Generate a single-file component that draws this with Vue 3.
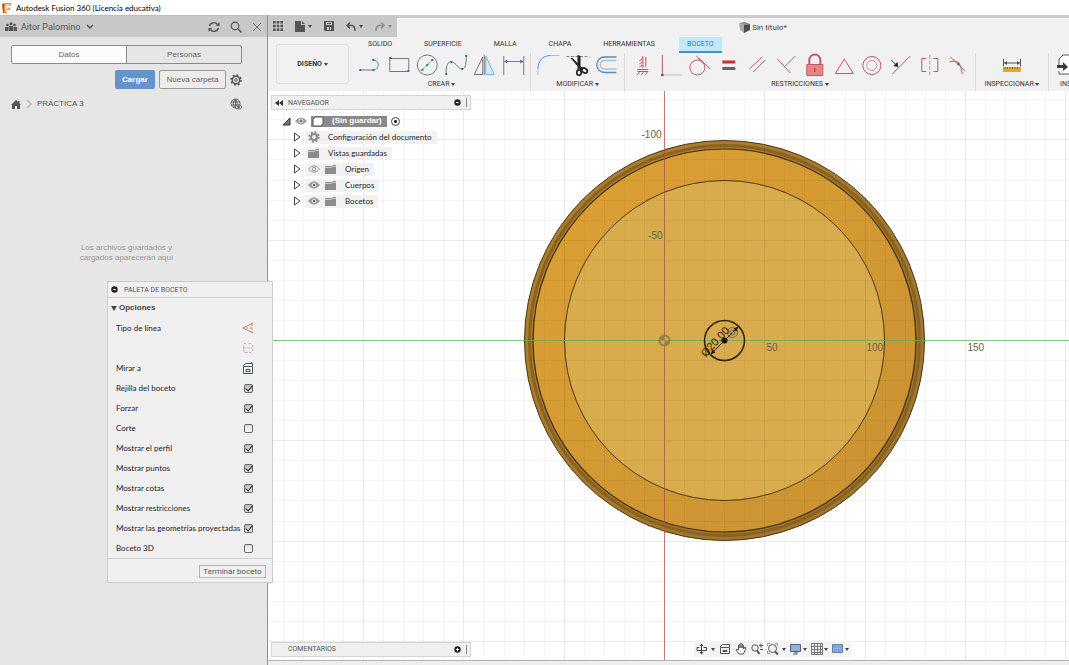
<script setup>
import { ref } from 'vue'

const minor = Array.from({ length: 81 }, (_, i) => i - 40)
const step = 20.06

const tabs = ['SOLIDO', 'SUPERFICIE', 'MALLA', 'CHAPA', 'HERRAMIENTAS', 'BOCETO']
const activeTab = ref('BOCETO')

const tree = ref([
  { label: 'Configuración del documento', icon: 'gear' },
  { label: 'Vistas guardadas', icon: 'folder' },
  { label: 'Origen', icon: 'folder', eye: true, hidden: true },
  { label: 'Cuerpos', icon: 'folder', eye: true },
  { label: 'Bocetos', icon: 'folder', eye: true }
])

const options = ref([
  { id: 'grid', label: 'Rejilla del boceto', on: true },
  { id: 'snap', label: 'Forzar', on: true },
  { id: 'slice', label: 'Corte', on: false },
  { id: 'profile', label: 'Mostrar el perfil', on: true },
  { id: 'points', label: 'Mostrar puntos', on: true },
  { id: 'dims', label: 'Mostrar cotas', on: true },
  { id: 'constraints', label: 'Mostrar restricciones', on: true },
  { id: 'projected', label: 'Mostrar las geometrías proyectadas', on: true },
  { id: 'sketch3d', label: 'Boceto 3D', on: false }
])
</script>

<template>
  <div class="app">
    <header class="titlebar">
      <svg width="10" height="10" viewBox="0 0 10 10" aria-hidden="true">
        <path d="M0 1L3 0V10H1Z" fill="#b9480f" /><path d="M2 0H9V3H5V4.500H8V7H5V10H2Z" fill="#f08a3c" />
        <path d="M4 2H8M4 5H7M4 2V9" stroke="#fff" fill="none" />
      </svg>
      <span>Autodesk Fusion 360 (Licencia educativa)</span>
    </header>

    <div class="body">
      <aside class="data-panel">
        <div class="user-bar">
          <svg width="12" height="10" viewBox="0 0 12 10" fill="#555" aria-hidden="true">
            <circle cx="2.500" cy="3" r="1.300" /><circle cx="6" cy="1.800" r="1.500" /><circle cx="9.500" cy="3" r="1.300" />
            <path d="M0 9V5H3.500V9ZM4 9V4H8V9ZM8.500 9V5H12V9Z" />
          </svg>
          <button class="user">Aitor Palomino
            <svg width="8" height="6" viewBox="0 0 8 6" fill="none" stroke="#555" stroke-width="1.500"><path d="M1 1L4 4L7 1" /></svg>
          </button>
          <button class="ib" aria-label="Actualizar">
            <svg width="12" height="12" viewBox="0 0 12 12" fill="none" stroke="#555" stroke-width="1.400">
              <path d="M1.500 5A4.500 4.500 0 0 1 9.500 3.500M10.500 7A4.500 4.500 0 0 1 2.500 8.500" />
              <path d="M11.500 1V5H8ZM.5 11V7H4Z" fill="#555" stroke="none" />
            </svg>
          </button>
          <button class="ib" aria-label="Buscar">
            <svg width="12" height="12" viewBox="0 0 12 12" fill="none" stroke="#555" stroke-width="1.200"><circle cx="5" cy="5" r="3.800" /><path d="M8 8L11.500 11.500" stroke-width="1.500" /></svg>
          </button>
          <button class="ib" aria-label="Cerrar">
            <svg width="10" height="10" viewBox="0 0 10 10" stroke="#777"><path d="M1 1L9 9M9 1L1 9" /></svg>
          </button>
        </div>
        <div class="panel-content">
          <div class="segmented">
            <button class="on">Datos</button><button>Personas</button>
          </div>
          <div class="actions">
            <button class="primary">Cargar</button>
            <button class="secondary">Nueva carpeta</button>
            <button class="ib" aria-label="Ajustes">
              <svg width="12" height="12" viewBox="0 0 12 12" fill="none" stroke="#555"><circle cx="6" cy="6" r="3.700" stroke-width="1.500" /><circle cx="6" cy="6" r="1.200" /><circle cx="6" cy="6" r="5" stroke-width="1.600" stroke-dasharray="1.900 2.030" /></svg>
            </button>
          </div>
          <nav class="crumbs">
            <svg width="10" height="9" viewBox="0 0 10 9" fill="#555"><path d="M0 5L5 0L7 2V1H8.500V3.500L10 5H9V9H6V6H4V9H1V5Z" /></svg>
            <svg width="6" height="10" viewBox="0 0 6 10" fill="none" stroke="#bbb" stroke-width="1.300"><path d="M1 1L5 5L1 9" /></svg>
            <span>PRÁCTICA 3</span>
            <svg class="globe" width="12" height="12" viewBox="0 0 12 12" fill="none" stroke="#666"><circle cx="5.500" cy="5.500" r="4.500" /><path d="M1 4H10M1 7H10M5.500 1V10M5.500 1Q1 5.500 5.500 10M5.500 1Q9 5.500 5.500 10" /><ellipse cx="8.500" cy="9" rx="3.300" ry="2" fill="#eee" /><circle cx="8.500" cy="9" r="1" fill="#555" /></svg>
          </nav>
          <p class="empty">Los archivos guardados y<br>cargados aparecerán aquí</p>
        </div>
      </aside>

      <main class="workspace">
        <div class="top-row">
          <div class="quick">
            <button class="ib" aria-label="Panel de datos">
              <svg width="10" height="10" viewBox="0 0 10 10" fill="#555"><path d="M0 0H2.600V2.600H0ZM3.700 0H6.300V2.600H3.700ZM7.400 0H10V2.600H7.400ZM0 3.700H2.600V6.300H0ZM3.700 3.700H6.300V6.300H3.700ZM7.400 3.700H10V6.300H7.400ZM0 7.400H2.600V10H0ZM3.700 7.400H6.300V10H3.700ZM7.400 7.400H10V10H7.400Z" /></svg>
            </button>
            <button class="ib with-caret" aria-label="Archivo">
              <svg width="10" height="11" viewBox="0 0 10 11" fill="#555"><path d="M0 0H6V4H10V11H0ZM7 0L10 3H7Z" /></svg><i class="caret"></i>
            </button>
            <button class="ib" aria-label="Guardar">
              <svg width="10" height="10" viewBox="0 0 10 10"><path d="M0 0H10V10H1L0 9Z" fill="#555" /><path d="M2 1H8V4H2ZM3 6H7V9H3Z" fill="#c8c8c8" /><path d="M3 2.500H7M5.500 6V9" stroke="#555" /></svg>
            </button>
            <button class="ib with-caret" aria-label="Deshacer">
              <svg width="10" height="9" viewBox="0 0 10 9" fill="none" stroke="#555" stroke-width="1.500"><path d="M4 .5L1 3.500L4 6.500M1 3.500H6Q9 4 9 9" /></svg><i class="caret"></i>
            </button>
            <button class="ib with-caret faded" aria-label="Rehacer">
              <svg width="10" height="9" viewBox="0 0 10 9" fill="none" stroke="#555" stroke-width="1.500"><path d="M6 .5L9 3.500L6 6.500M9 3.500H4Q1 4 1 9" /></svg><i class="caret"></i>
            </button>
          </div>
          <div class="doc-title">
            <svg width="11" height="11" viewBox="0 0 11 11"><path d="M0 1L6 0L11 2L5 3Z" fill="#888" /><path d="M0 1L5 3V11L1 8Z" fill="#aaa" /><path d="M5 3L11 2V8L5 11Z" fill="#4d4d4d" /></svg>
            <span>Sin título*</span>
          </div>
        </div>

        <section class="ribbon">
          <button class="design">DISEÑO <i class="caret"></i></button>
          <div class="ribbon-main">
            <div class="tabs" role="tablist">
              <button v-for="t in tabs" :key="t" role="tab" :class="{ active: t === activeTab }" @click="activeTab = t">{{ t }}</button>
            </div>
            <div class="groups">
              <div class="group create">
                <div class="tools">
                  <svg viewBox="0 0 28 24"><path class="g" d="M4 17H17" /><path class="b" d="M17 17A5 5 0 0 0 17 7" /><path class="dot" d="M3 16h2v2h-2zM16 16h2v2h-2zM16 6h2v2h-2z" /></svg>
                  <svg viewBox="0 0 28 24"><path class="g" d="M4.500 5.500H23.500V18.500H4.500Z" /><path class="dot" d="M4 4h2v2h-2zM22 17h2v2h-2z" /></svg>
                  <svg viewBox="0 0 28 24"><circle class="g" cx="14" cy="12" r="10" /><path class="b" stroke-dasharray="3 1" d="M9 17L19 7" /><path class="dot" d="M8 16h2v2h-2zM13 11h2v2h-2zM18 6h2v2h-2z" /></svg>
                  <svg viewBox="0 0 28 24"><path class="g" d="M4 21C3 14 6 7 10 9C14 10 17 17 20 16C24 15 24 9 24 3" /><path class="dot" d="M3 20h2v2h-2zM8 8h2v2h-2zM19 15h2v2h-2zM23 2h2v2h-2z" /></svg>
                  <svg viewBox="0 0 28 24"><path d="M15.500 3V21.500H24Z" fill="#d5ecf8" stroke="#72b2d8" /><path class="g" d="M12.500 4V21.500H4Z" /><path class="g" d="M14 2V22" /></svg>
                  <svg viewBox="0 0 28 24"><path class="g" d="M4.500 3V22M24.500 3V22" /><path class="b" d="M5 8.500H24" /><path class="dot" d="M5 8.500L8 6.500V10.500ZM24 8.500L21 6.500V10.500Z" /></svg>
                </div>
                <button class="group-label">CREAR <i class="caret"></i></button>
              </div>
              <div class="group modify">
                <div class="tools">
                  <svg viewBox="0 0 28 24"><path class="l" d="M3.500 16V22M16 2.500H25" /><path class="b" d="M3.500 16C3.500 8 8 2.500 16 2.500" /></svg>
                  <svg viewBox="0 0 28 24"><path d="M3 3.500H26" stroke="#888" stroke-dasharray="3 1.500" /><path d="M7 5L9 5L20 16L18 18Z M14 2L17 3L17 14L14 17Z" fill="#222" /><g fill="none" stroke="#222" stroke-width="1.700"><ellipse cx="15.500" cy="19.500" rx="2.200" ry="2.700" /><ellipse cx="21" cy="17.500" rx="3" ry="2.200" transform="rotate(35 21 17.500)" /></g></svg>
                  <svg viewBox="0 0 28 24"><path class="b" d="M24 4H12A7.500 7.500 0 0 0 12 19.500H24" stroke-width="1.300" /><path class="l" d="M24 7.500H12A4 4 0 0 0 12 16H24" stroke-width="1.500" /></svg>
                </div>
                <button class="group-label">MODIFICAR <i class="caret"></i></button>
              </div>
              <div class="group constrain">
                <div class="tools">
                  <svg viewBox="0 0 28 24"><path class="r" d="M14.500 3V15M17.500 4V14M14 6L11 8M14 9L11 11M14 12L11 14M9 16.500H20M9 18.500H20M11 19L9 22M15 19L13 22M19 19L17 22" /></svg>
                  <svg viewBox="0 0 28 24"><path class="l" d="M5 22H25" /><path class="r" d="M5 2V22" /><circle cx="5" cy="22" r="1.300" fill="#8e3036" /></svg>
                  <svg viewBox="0 0 28 24"><circle class="r" cx="12" cy="14.500" r="7.500" /><path class="g" d="M11 3L25 16" /><path class="r" d="M13 5L19 11" /></svg>
                  <svg viewBox="0 0 28 24"><path d="M8 7.500H21V10.500H8Z" fill="#cf2d35" /><path d="M8 14H21V17H8Z" fill="#666" /></svg>
                  <svg viewBox="0 0 28 24"><path class="r" d="M6 16L19 4" /><path class="g" d="M10 19L22 7" /></svg>
                  <svg viewBox="0 0 28 24"><path class="r" d="M6 6L19 20" /><path class="g" d="M24 3L13 14" /></svg>
                  <svg viewBox="0 0 28 24"><path d="M9 12V7a5.500 5.500 0 0 1 11 0V12" fill="none" stroke="#c6575b" stroke-width="2" /><path d="M6.500 11.500H22.500V22.500H6.500Z" fill="#e58586" stroke="#c6575b" /><path d="M14.500 15V19" stroke="#a82c32" /></svg>
                  <svg viewBox="0 0 28 24"><path class="r" d="M15 6L24 20.500H6Z" /></svg>
                  <svg viewBox="0 0 28 24"><circle class="r" cx="14.500" cy="12.500" r="9" /><circle class="r soft" cx="14.500" cy="12.500" r="5" /></svg>
                  <svg viewBox="0 0 28 24"><path class="g" d="M6 21L15 12" /><path class="r" d="M15 12L24 3" /><path d="M5 7L9 11" stroke="#333" /><path d="M12 14L7 13L11 9Z" fill="#222" /></svg>
                  <svg viewBox="0 0 28 24"><path class="r" d="M11 5.500H6.500V18.500H11" /><path class="r soft" stroke-dasharray="4 1.500" d="M14.500 2V22" /><path class="g" d="M18 5.500H22.500V18.500H18" /></svg>
                  <svg viewBox="0 0 28 24"><path class="r" d="M7 4L22 18" /><path class="g" d="M6 9C17 6 17 12 19 21" /><circle cx="15" cy="11" r="1.200" fill="#9d3b40" /></svg>
                </div>
                <button class="group-label">RESTRICCIONES <i class="caret"></i></button>
              </div>
              <div class="group inspect">
                <div class="tools">
                  <svg viewBox="0 0 28 24"><path d="M5.500 6V13M22.500 6V13M6 10H22" stroke="#555" /><path d="M6 10L9 8V12ZM22 10L19 8V12Z" fill="#555" /><path d="M5 14H23V19H5Z" fill="#e6a82f" /><path d="M7 14v2M9.500 14v2M12 14v2M14.500 14v2M17 14v2M19.500 14v2" stroke="#9b6a16" /></svg>
                </div>
                <button class="group-label">INSPECCIONAR <i class="caret"></i></button>
              </div>
              <div class="group insert">
                <div class="tools">
                  <svg viewBox="0 0 28 24"><path d="M7 14V6L11 2H26V21H7V18" fill="#fff" stroke="#555" /><path d="M5 12H11V9L16 14L11 18V15H5Z" fill="#333b45" /></svg>
                </div>
                <button class="group-label">INSERTAR <i class="caret"></i></button>
              </div>
            </div>
          </div>
        </section>

        <section class="canvas">
          <svg class="scene" aria-label="Boceto">
            <defs>
              <linearGradient id="face" x1="0" y1="0" x2="1" y2="1"><stop offset="0" stop-color="#dda134" /><stop offset="1" stop-color="#c99132" /></linearGradient>
              <linearGradient id="rim" x1="0" y1="0" x2="1" y2="1"><stop offset="0" stop-color="#b0802d" /><stop offset="1" stop-color="#9c742c" /></linearGradient>
            </defs>
            <g transform="translate(396.500 249.500)">
              <circle cx="60" cy="0" r="200" fill="url(#rim)" stroke="#4a3818" />
              <circle cx="60" cy="0" r="195" fill="none" stroke="#8a6221" stroke-width="3" />
              <circle cx="60" cy="0" r="191.500" fill="url(#face)" stroke="#3b2b10" stroke-width="1.200" />
              <circle cx="60" cy="0" r="160" fill="#d8ab4c" stroke="#4a3817" />
              <g v-for="n in minor" :key="n">
                <path :d="`M${Math.round(n * step)} -900V900M-900 ${Math.round(n * step)}H900`" :class="n % 5 ? 'minor' : 'major'" />
              </g>
              <path d="M0 -900V900" stroke="#b5524a" stroke-opacity=".75" />
              <path d="M-900 0H900" stroke="#58b558" stroke-opacity=".7" />
              <circle r="6" fill="#8d7440" fill-opacity=".8" /><path d="M0 0V-4A4 4 0 0 1 4 0ZM0 0V4A4 4 0 0 1 -4 0Z" fill="#c9a95e" />
              <g class="ticks">
                <text x="-3" y="-203" text-anchor="end">-100</text><text x="-2" y="-102" text-anchor="end">-50</text>
                <text x="102" y="10">50</text><text x="202" y="10">100</text><text x="303" y="10">150</text>
              </g>
              <circle cx="60" cy="0" r="20" fill="none" stroke="#2d200b" stroke-width="1.500" />
              <g fill="none" stroke="#6e6755"><circle cx="68" cy="-8" r="5" /><circle cx="68" cy="-8" r="2.500" /></g>
              <path d="M46 14L74 -14" stroke="#1c1508" /><path d="M46 14L51 12L48 9ZM74 -14L69 -12L72 -9Z" fill="#1c1508" />
              <circle cx="60" cy="0" r="3" fill="#1c1508" />
              <text class="dim" transform="translate(41 17) rotate(-47)">Ø20.00</text>
            </g>
          </svg>

          <div class="browser">
            <div class="bar">
              <svg width="8" height="6" viewBox="0 0 8 6" fill="#333"><path d="M4 0V6L0 3ZM8 0V6L4 3Z" /></svg>
              <span>NAVEGADOR</span>
              <button class="ib end" aria-label="Contraer navegador"><svg width="7" height="7" viewBox="0 0 7 7"><circle cx="3.500" cy="3.500" r="3.200" fill="#222" /><path d="M2 3.500H5" stroke="#fff" /></svg></button>
              <i class="grip"></i>
            </div>
            <div class="root">
              <svg width="9" height="9" viewBox="0 0 9 9"><path d="M8 1V8H1Z" fill="#777" stroke="#333" /></svg>
              <svg width="12" height="8" viewBox="0 0 12 8"><path d="M0 4Q6 -3 12 4Q6 11 0 4Z" fill="#999" /><circle cx="6" cy="4" r="2" fill="#777" stroke="#eee" /></svg>
              <span class="selected"><svg width="12" height="11" viewBox="0 0 12 11"><path d="M1 3L3 1H11V8L9 10H1Z" fill="#fff" stroke="#555" /></svg><span>(Sin guardar)</span></span>
              <input type="radio" checked aria-label="Activar componente">
            </div>
            <div v-for="row in tree" :key="row.label" class="node">
              <button class="ib" :aria-label="'Expandir ' + row.label"><svg width="8" height="10" viewBox="0 0 8 10"><path d="M1.500 1L7 5L1.500 9Z" fill="#f8f8f8" stroke="#444" /></svg></button>
              <span class="chip">
                <svg v-if="row.eye" width="12" height="8" viewBox="0 0 12 8"><path d="M.5 4Q6 -2.500 11.500 4Q6 10.500 .5 4Z" :fill="row.hidden ? 'none' : '#999'" stroke="#999" /><circle cx="6" cy="4" r="1.800" :fill="row.hidden ? 'none' : '#666'" :stroke="row.hidden ? '#999' : '#eee'" /></svg>
                <svg v-if="row.icon === 'gear'" width="12" height="12" viewBox="0 0 12 12" fill="none" stroke="#888"><circle cx="6" cy="6" r="3" stroke-width="2" /><circle cx="6" cy="6" r="4.800" stroke-width="1.800" stroke-dasharray="1.900 1.870" /></svg>
                <svg v-else width="12" height="9" viewBox="0 0 12 9"><path d="M0 1H7L8 0H11V2H11V9H0Z" fill="#8c8c8c" /><path d="M0 2.500H6L7.500 1.500H11" stroke="#ccc" fill="none" /></svg>
                <span>{{ row.label }}</span>
              </span>
            </div>
          </div>

          <div class="canvas-foot">
            <div class="bar comments">
              <span>COMENTARIOS</span>
              <button class="ib end" aria-label="Añadir comentario"><svg width="7" height="7" viewBox="0 0 7 7"><circle cx="3.500" cy="3.500" r="3.200" fill="#222" /><path d="M2 3.500H5M3.500 2V5" stroke="#fff" /></svg></button>
              <i class="grip"></i>
            </div>
            <div class="viewbar">
              <button class="ib with-caret" aria-label="Órbita"><svg width="12" height="12" viewBox="0 0 12 12" fill="none" stroke="#444"><path d="M5.500 1V11" /><path d="M3.500 4.500H1V7.500H10.500V4.500H7.500" /><path d="M3.500 3L5.500 .5L7.500 3ZM3.500 9L5.500 11.500L7.500 9Z" fill="#444" stroke="none" /></svg><i class="caret"></i></button>
              <button class="ib" aria-label="Mirar a"><svg width="12" height="12" viewBox="0 0 12 12" fill="none" stroke="#555"><path d="M1.500 4.500H10.500V10.500H1.500ZM4 7.500H8V8.500H4ZM1 4L3.500 1.500H10.500V4" /></svg></button>
              <button class="ib" aria-label="Encuadre"><svg width="12" height="12" viewBox="0 0 12 12" fill="#fff" stroke="#555"><path d="M4 11L1 7Q1 5.500 3.500 7V2Q4 1 5 2V5V1Q6 0 7 1V5V2Q8 1 8.500 2.500V6L10 4Q11.500 4 10.500 6L8.500 11Z" /></svg></button>
              <button class="ib" aria-label="Zoom"><svg width="12" height="12" viewBox="0 0 12 12" fill="none" stroke="#555"><circle cx="4" cy="5" r="3.200" /><path d="M6 7.500L8.500 11" stroke-width="2" /><path d="M8 2.500H12M10 .5V4.500M9 6.500H12" /></svg></button>
              <button class="ib with-caret" aria-label="Ajustar"><svg width="12" height="12" viewBox="0 0 12 12" fill="none" stroke="#555"><circle cx="5.500" cy="5.500" r="4" /><path d="M8 8.500L11 11.500" stroke-width="2" /><path d="M.5 3V.5H3M8 .5H10.500V3M.5 8V10.500H3" stroke="#999" /></svg><i class="caret"></i></button>
              <button class="ib with-caret tight" aria-label="Visualización"><svg width="12" height="12" viewBox="0 0 12 12"><path d="M.5 1.500H10.500V8.500H.5Z" fill="#8fb3dc" stroke="#4d617a" /><path d="M4 9H7V11H3" stroke="#555" fill="none" /></svg><i class="caret"></i></button>
              <button class="ib with-caret tight" aria-label="Rejilla"><svg width="12" height="12" viewBox="0 0 12 12" fill="none" stroke="#777"><path d="M.5 .5H11.500V11.500H.5ZM3.500 0V12M6.500 0V12M9.500 0V12M0 3.500H12M0 6.500H12M0 9.500H12" /></svg><i class="caret"></i></button>
              <button class="ib with-caret tight" aria-label="Ventanas"><svg width="12" height="12" viewBox="0 0 12 12"><path d="M.5 1.500H10.500V9.500H.5Z" fill="#7ea6d6" stroke="#6583a3" /><path d="M5.500 2V9M1 5.500H10" stroke="#8fb3de" /></svg><i class="caret"></i></button>
            </div>
          </div>
        </section>
        <div class="timeline"></div>
      </main>

      <section class="palette" aria-label="Paleta de boceto">
        <div class="palette-head">
          <svg width="7" height="7" viewBox="0 0 7 7"><circle cx="3.500" cy="3.500" r="3.200" fill="#222" /><path d="M2 3.500H5" stroke="#fff" /></svg>
          <span>PALETA DE BOCETO</span>
        </div>
        <button class="section-toggle"><i class="caret big"></i>Opciones</button>
        <div class="opt"><span>Tipo de línea</span>
          <button class="ib" aria-label="Construcción"><svg width="12" height="12" viewBox="0 0 12 12" fill="none" stroke="#c08a5e"><path d="M11 1L1 6L11 11" /><path d="M4 6H11M10 2V10" stroke-dasharray="2 1.500" /></svg></button></div>
        <div class="opt"><span></span>
          <button class="ib" aria-label="Línea de centro"><svg width="12" height="12" viewBox="0 0 12 12" fill="none" stroke="#c9b9b4"><path d="M4 1.500H2Q1 6 2 10.500H9L11 8V4L9 1.500H6" stroke-dasharray="3 1" /><path d="M1 6H11" stroke-dasharray="3 1" /></svg></button></div>
        <div class="opt"><span>Mirar a</span>
          <button class="ib" aria-label="Mirar a"><svg width="12" height="12" viewBox="0 0 12 12" fill="none" stroke="#46525f"><path d="M1.500 4.500H10.500V11.500H1.500ZM4 7.500H8V9.500H4ZM1 4L3.500 1.500H10.500V4M9.500 0V2" /></svg></button></div>
        <div v-for="o in options" :key="o.id" class="opt">
          <label :for="o.id">{{ o.label }}</label>
          <input :id="o.id" v-model="o.on" type="checkbox">
        </div>
        <div class="palette-foot"><button>Terminar boceto</button></div>
      </section>
    </div>
  </div>
</template>

<style>
body { margin: 0; overflow: hidden; }
</style>

<style scoped>
* { box-sizing: border-box; }
.app { min-height: 100vh; display: flex; flex-direction: column; font: 8px/10px "Liberation Sans", Arial, sans-serif; color: #444; background: #fff; }
button { font: inherit; color: inherit; background: none; border: 0; padding: 0; margin: 0; white-space: nowrap; }
svg { display: block; flex: none; }
.ib { display: flex; align-items: center; }
.with-caret { gap: 3px; }
.with-caret.tight { gap: 1px; }
.caret { display: inline-block; flex: none; border: 2px solid transparent; border-top: 3px solid #444; border-bottom: 0; vertical-align: middle; }
.caret.big { border-width: 5px 3px 0; }

.titlebar { height: 15px; display: flex; align-items: center; gap: 4px; padding-left: 2px; font-family: Lato, sans-serif; color: #000; }
.body { flex: 1; display: flex; position: relative; }

.data-panel { width: 268px; flex: none; background: #e6e6e6; border-right: 1px solid #909090; }
.user-bar { height: 22px; background: #c8c8c8; border-top: 1px solid #bdbdbd; display: flex; align-items: center; gap: 10px; padding: 0 5px; color: #555; }
.user-bar > svg { margin-right: -6px; }
.user { display: flex; align-items: center; gap: 6px; margin-right: auto; font: 9px/12px Roboto, sans-serif; color: #555; }
.panel-content { padding: 8px 25px 0 11px; color: #555; }
.segmented { display: flex; border: 1px solid #8c8c8c; border-radius: 2px; height: 19px; }
.segmented button { flex: 1; color: #666; }
.segmented .on { background: #fcfcfc; border-right: 1px solid #8c8c8c; }
.actions { display: flex; justify-content: flex-end; align-items: center; gap: 4px; margin-top: 6px; height: 19px; }
.primary { width: 40px; height: 19px; border-radius: 2px; background: #6494c9; color: #fff; font-weight: bold; }
.secondary { width: 67px; height: 19px; border: 1px solid #999; border-radius: 2px; background: #ececec; color: #666; }
.crumbs { display: flex; align-items: center; gap: 5px; height: 12px; margin-top: 9px; }
.globe { margin-left: auto; }
.empty { margin: 133px 0 0; text-align: center; color: #999; }

.workspace { flex: 1; min-width: 0; display: flex; flex-direction: column; }
.top-row { height: 22px; display: flex; background: #f1f1f1; border-top: 3px solid #ccc; }
.quick { width: 129px; margin-top: -3px; background: #c8c8c8; display: flex; align-items: center; justify-content: space-between; padding: 0 5px; }
.faded { opacity: .5; }
.doc-title { flex: 1; display: flex; align-items: center; justify-content: center; gap: 2px; padding-left: 60px; font-family: Roboto, sans-serif; }
.ribbon { display: flex; background: #f1f1f1; overflow: hidden; font: 7px/10px Roboto, sans-serif; color: #333; }
.design { flex: none; width: 73px; height: 40px; margin: 7px 1px 0 8px; border: 1px solid #dcdcdc; border-radius: 3px; font-weight: bold; }
.ribbon-main { flex: none; }
.tabs { display: flex; gap: 16px; height: 16px; padding-left: 10px; }
.tabs button { padding: 0 8px; border-bottom: 2px solid transparent; }
.tabs .active { background: #c5e8f8; color: #2580b0; border-bottom-color: #3f94bd; }
.groups { display: flex; padding-left: 6px; }
.group { flex: none; height: 38px; display: flex; flex-direction: column; align-items: center; }
.group + .group { border-left: 1px solid #dadada; padding-left: 3px; }
.create { width: 174px; padding-right: 3px; }
.modify { width: 94px; padding-right: 3px; }
.constrain { width: 351px; padding-right: 3px; }
.inspect, .insert { width: 73px; padding-right: 3px; }
.insert .group-label { align-self: flex-start; margin-left: 8px; }
.tools { display: flex; width: 100%; height: 24px; }
.tools svg { flex: 1; height: 24px; min-width: 0; }
.insert .tools { width: 28px; align-self: flex-start; }
.group-label { line-height: 14px; height: 14px; }
.g { fill: none; stroke: #777; }
.l { fill: none; stroke: #bbb; }
.b { fill: none; stroke: #4d8fc4; }
.r { fill: none; stroke: #c4575b; }
.soft { stroke: #d69093; }
.dot { fill: #2f74ad; }

.canvas { flex: 1; position: relative; display: flex; flex-direction: column; justify-content: space-between; overflow: hidden; background: #fff; padding: 4px 0 3px 3px; }
.scene { position: absolute; inset: 0; width: 100%; height: 100%; }
.minor { stroke: #000; stroke-opacity: .04; }
.major { stroke: #000; stroke-opacity: .08; }
.ticks text { font: 10px "Liberation Sans", Arial, sans-serif; fill: #6b6148; }
.dim { font: 11px "Liberation Sans", Arial, sans-serif; fill: #2d230f; }
.browser, .canvas-foot { position: relative; }
.browser { font-family: Lato, sans-serif; color: #222; }
.bar { width: 200px; height: 15px; display: flex; align-items: center; gap: 5px; padding: 0 1px 0 3px; background: #f0f0f0; border: 1px solid #d4d4d4; color: #555; font: 7px/10px Roboto, sans-serif; }
.end { margin-left: auto; }
.grip { width: 2px; height: 9px; margin-right: 1px; border-left: 1px solid #888; }
.root { display: flex; align-items: center; gap: 4px; height: 16px; margin-top: 3px; padding-left: 11px; }
.selected { display: flex; align-items: center; gap: 8px; width: 76px; height: 11px; padding-left: 1px; background: #8a8a8a; color: #fff; font: bold 8px/10px "Liberation Sans", Arial, sans-serif; }
.root input { appearance: none; width: 9px; height: 9px; margin: 0; border: 1px solid #444; border-radius: 50%; background: radial-gradient(#222 0 1px, #fff 2px); }
.node { display: flex; align-items: center; height: 16px; padding-left: 22px; gap: 4px; }
.chip { display: flex; align-items: center; gap: 5px; height: 13px; padding: 0 5px 0 3px; background: rgba(240, 240, 240, .85); }
.chip svg + span { margin-left: 3px; }
.canvas-foot { display: flex; align-items: center; }
.comments { padding-left: 16px; }
.viewbar { display: flex; align-items: center; gap: 4px; margin-left: 223px; height: 16px; padding: 0 2px; background: #f3f3f3; }
.timeline { height: 5px; background: #eee; border-top: 1px solid #b5b5b5; }

.palette { position: absolute; left: 107px; top: 266px; width: 166px; background: #f0f0f0; border: 1px solid #ccc; font-family: Lato, sans-serif; color: #222; }
.palette-head { height: 16px; display: flex; align-items: center; gap: 6px; padding-left: 3px; border-bottom: 1px solid #ccc; color: #555; font: 7px/10px Roboto, sans-serif; }
.section-toggle { display: flex; align-items: center; gap: 2px; height: 20px; padding-left: 3px; font: bold 8px/10px "Liberation Sans", Arial, sans-serif; color: #444; }
.opt { display: flex; align-items: center; justify-content: space-between; height: 20px; padding: 0 18px 0 8px; white-space: nowrap; }
.opt input { appearance: none; position: relative; width: 9px; height: 9px; margin: 0 1px 0 0; border: 1px solid #666; border-radius: 2px; background: linear-gradient(#ddd, #fff); }
.opt input:checked { background: linear-gradient(#bbb, #e4e4e4); }
.opt input:checked::after { content: ""; position: absolute; left: 2px; top: -1px; width: 3px; height: 6px; border: solid #222; border-width: 0 1px 1px 0; transform: rotate(40deg); }
.palette-foot { display: flex; justify-content: flex-end; padding: 6px 6px 4px; border-top: 1px solid #d2d2d2; }
.palette-foot button { width: 67px; height: 13px; border: 1px solid #b5b5b5; color: #555; font: 8px/10px Roboto, sans-serif; }
</style>
